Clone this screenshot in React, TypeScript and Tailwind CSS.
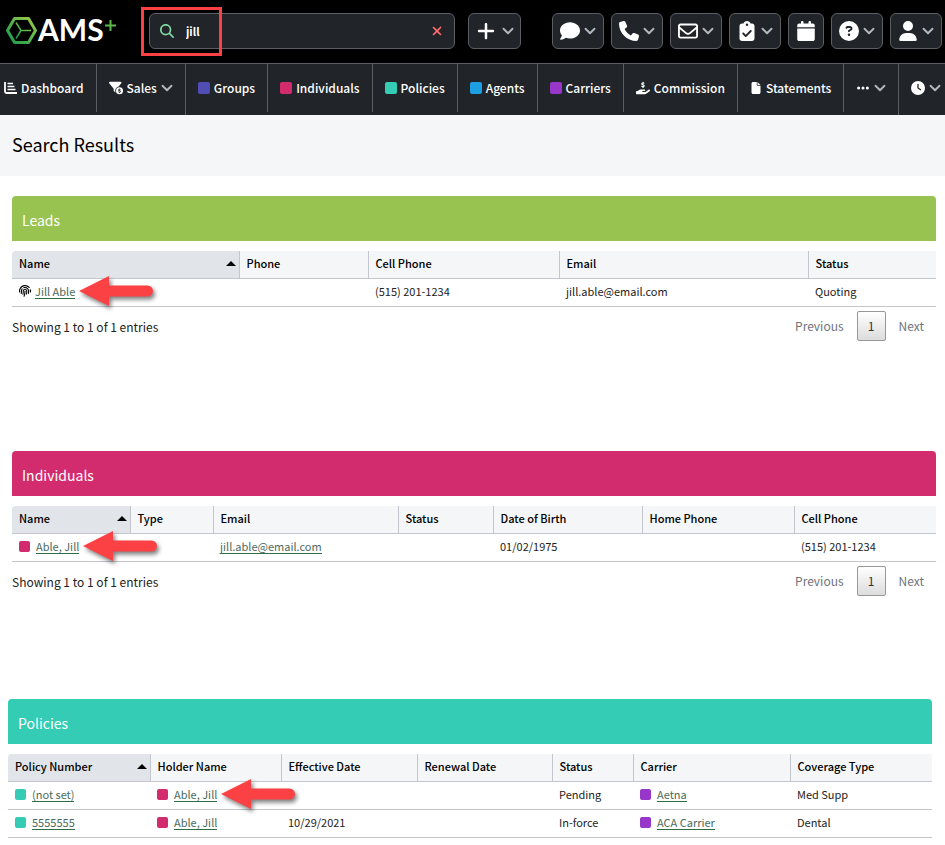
import type { ReactNode } from 'react';
import { ChevronDown } from 'lucide-react';
import {
  FaCalendar,
  FaCircleQuestion,
  FaClipboardCheck,
  FaClock,
  FaComment,
  FaEllipsis,
  FaFile,
  FaFilterCircleDollar,
  FaFingerprint,
  FaHandHoldingDollar,
  FaMagnifyingGlass,
  FaPhone,
  FaPlus,
  FaRegEnvelope,
  FaUser,
  FaXmark,
} from 'react-icons/fa6';

interface Column {
  label: string;
  width: string;
}

interface NavEntry {
  label: string;
  icon: ReactNode;
  menu?: boolean;
  tall?: boolean;
  hideLabel?: boolean;
}

function Square({ color }: { color: string }) {
  return <span className={`inline-block shrink-0 rounded-xs ${color}`} />;
}

function Caret() {
  return <ChevronDown className="-mx-[3px] size-[18px] shrink-0 text-[#b4b8bf]" strokeWidth={2.5} />;
}

function AxisIcon() {
  return (
    <svg viewBox="0 0 13 12" className="h-3 w-[13px]" fill="none" stroke="currentColor">
      <path d="M1 0v9.500a1.500 1.500 0 0 0 1.500 1.500H13" strokeWidth="1.800" />
      <path d="M3.500 1.500H9M3.500 4.500h7M3.500 7.500h8" strokeWidth="1.600" />
    </svg>
  );
}

function Logo() {
  return (
    <a href="#" aria-label="AMS+" className="flex h-9 w-[111px] shrink-0 items-center text-white">
      <svg viewBox="0 0 111 36" className="h-9 w-[111px]">
        <defs>
          <linearGradient id="hex" x1="0" y1="1" x2="1" y2="0">
            <stop offset="0" stopColor="#149a4b" />
            <stop offset="1" stopColor="#9ccb4c" />
          </linearGradient>
        </defs>
        <g fill="none" stroke="url(#hex)" strokeLinejoin="round">
          <path d="M8.500 5.500h14l7 12-7 12h-14l-7-12z" strokeWidth="3" />
          <path d="M15 17.500L10 9.500M15 17.500h10M15 17.500l-5 8" strokeWidth="1.500" />
        </g>
        <path d="M104.500 7v11M99 12.500h11" stroke="#5cb848" strokeWidth="2" />
        <text x="32" y="28" fill="#fff" fontSize="30" fontWeight="700" fontFamily="Lato, sans-serif">AMS</text>
      </svg>
    </a>
  );
}

// Red callout arrow, always points left
function Arrow() {
  return (
    <svg
      viewBox="0 0 74 34"
      className="pointer-events-none absolute top-1/2 left-full z-10 ml-1 h-[34px] w-[74px] -translate-y-1/2 overflow-visible drop-shadow-[2px_3px_2px_rgba(0,0,0,0.5)]"
    >
      <path d="M0 17L30 2v9.500h38.500a5 5 0 0 1 0 11H30V32z" fill="#fc4144" />
    </svg>
  );
}

function TextLink({ children, arrow }: { children: ReactNode; arrow?: boolean }) {
  return (
    <span className="relative inline-block">
      <a href="#" className="inline-block border-b border-[#2f6b43] leading-[14px] text-[#4b6b5c]">
        {children}
      </a>
      {arrow && <Arrow />}
    </span>
  );
}

function Marked({ color, children, arrow }: { color: string; children: ReactNode; arrow?: boolean }) {
  return (
    <span className="flex items-center gap-1.5">
      <Square color={`size-[11px] ${color}`} />
      <TextLink arrow={arrow}>{children}</TextLink>
    </span>
  );
}

const actions = [
  { label: 'Messages', icon: <FaComment className="size-5" /> },
  { label: 'Calls', icon: <FaPhone className="size-5" /> },
  { label: 'Email', icon: <FaRegEnvelope className="size-5" /> },
  { label: 'Tasks', icon: <FaClipboardCheck className="size-5" /> },
  { label: 'Calendar', icon: <FaCalendar className="size-5" />, plain: true },
  { label: 'Help', icon: <FaCircleQuestion className="size-5" /> },
  { label: 'Account', icon: <FaUser className="size-5" /> },
];

const navEntries: NavEntry[] = [
  { label: 'Dashboard', icon: <AxisIcon /> },
  { label: 'Sales', icon: <FaFilterCircleDollar className="size-3.5" />, menu: true, tall: true },
  { label: 'Groups', icon: <Square color="size-3 bg-[#524db5]" /> },
  { label: 'Individuals', icon: <Square color="size-3 bg-[#d32c6e]" /> },
  { label: 'Policies', icon: <Square color="size-3 bg-[#34ccb4]" /> },
  { label: 'Agents', icon: <Square color="size-3 bg-[#1f9fe3]" /> },
  { label: 'Carriers', icon: <Square color="size-3 bg-[#9737c9]" /> },
  { label: 'Commission', icon: <FaHandHoldingDollar className="size-3.5" /> },
  { label: 'Statements', icon: <FaFile className="size-3" /> },
  { label: 'More', icon: <FaEllipsis className="size-3.5" />, menu: true, tall: true, hideLabel: true },
  { label: 'Recent', icon: <FaClock className="size-3.5" />, menu: true, hideLabel: true },
];

const leadColumns: Column[] = [
  { label: 'Name', width: 'w-[227px]' },
  { label: 'Phone', width: 'w-[129px]' },
  { label: 'Cell Phone', width: 'w-[191px]' },
  { label: 'Email', width: 'w-[249px]' },
  { label: 'Status', width: '' },
];

const individualColumns: Column[] = [
  { label: 'Name', width: 'w-[118px]' },
  { label: 'Type', width: 'w-[83px]' },
  { label: 'Email', width: 'w-[185px]' },
  { label: 'Status', width: 'w-[95px]' },
  { label: 'Date of Birth', width: 'w-[149px]' },
  { label: 'Home Phone', width: 'w-[152px]' },
  { label: 'Cell Phone', width: '' },
];

const policyColumns: Column[] = [
  { label: 'Policy Number', width: 'w-[142px]' },
  { label: 'Holder Name', width: 'w-[131px]' },
  { label: 'Effective Date', width: 'w-[136px]' },
  { label: 'Renewal Date', width: 'w-[135px]' },
  { label: 'Status', width: 'w-[81px]' },
  { label: 'Carrier', width: 'w-[157px]' },
  { label: 'Coverage Type', width: '' },
];

const policies = [
  { number: '(not set)', holder: 'Able, Jill', effective: '', status: 'Pending', carrier: 'Aetna', coverage: 'Med Supp' },
  { number: '5555555', holder: 'Able, Jill', effective: '10/29/2021', status: 'In-force', carrier: 'ACA Carrier', coverage: 'Dental' },
  { number: '123456', holder: 'Able, Jill', effective: '', status: 'In-force', carrier: 'Aetna', coverage: 'MAPD' },
];

function ResultTable({ columns, rows }: { columns: Column[]; rows: ReactNode[][] }) {
  return (
    <table className="mt-2.5 w-full table-fixed border-collapse text-[11px]">
      <thead>
        <tr className="h-[27px] border-b border-[#c3c6ce] bg-[#f5f6f8] text-left text-black">
          {columns.map((col, i) => (
            <th
              key={col.label}
              className={`px-[7px] pt-0 pb-0.5 font-medium ${col.width} ${i === 0 ? 'rounded-tl bg-[#e1e5e9]' : ''} ${i < columns.length - 1 ? 'border-r border-[#c3c6ce]' : ''}`}
            >
              <span className="flex items-center justify-between whitespace-nowrap">
                {col.label}
                {i === 0 && (
                  <svg viewBox="0 0 10 5" className="-mr-1 h-[5px] w-2.5"><path d="M5 0l5 5H0z" /></svg>
                )}
              </span>
            </th>
          ))}
        </tr>
      </thead>
      <tbody>
        {rows.map((row, i) => (
          <tr key={i} className="h-7 border-b border-[#c3c6ce]">
            {row.map((cell, j) => (
              <td key={j} className="px-[7px] pt-0 pb-0.5 whitespace-nowrap">{cell}</td>
            ))}
          </tr>
        ))}
      </tbody>
    </table>
  );
}

function Section({ title, color, className, children }: { title: string; color: string; className: string; children: ReactNode }) {
  return (
    <section className={className}>
      <h2 className={`flex h-[45px] items-center rounded-t px-2.5 pt-0.5 text-sm text-white ${color}`}>{title}</h2>
      {children}
    </section>
  );
}

function TableFooter() {
  return (
    <div className="flex items-start justify-between pt-1">
      <p className="pt-1.5 text-xs leading-5">Showing 1 to 1 of 1 entries</p>
      <div className="flex items-center gap-px text-xs text-[#70747a]">
        <button className="px-3">Previous</button>
        <button className="h-[30px] w-[29px] rounded-xs border border-[#979797] bg-linear-to-b from-white to-[#dcdcdc] text-[#333]">1</button>
        <button className="px-3">Next</button>
      </div>
    </div>
  );
}

export default function App() {
  return (
    <div className="h-screen overflow-hidden bg-white font-['Noto_Sans_CJK_SC',sans-serif] text-[#222]">
      <header className="flex h-[63px] items-center bg-black pr-[3px] pb-px pl-1.5">
        <Logo />
        <div className="relative ml-8 flex h-9 flex-1 items-center rounded-md border border-[#5b5e62] bg-[#212429] px-2.5">
          <FaMagnifyingGlass className="size-3.5 shrink-0 text-[#7fd6a0]" />
          <input aria-label="Search" defaultValue="jill" className="ml-3 w-full bg-transparent text-[11px] font-bold text-white outline-none" />
          <button aria-label="Clear search" className="text-[#ff6b6b]"><FaXmark className="size-3.5" /></button>
          <div className="pointer-events-none absolute -top-[7px] -left-[9px] h-[49px] w-[81px] border-3 border-[#fc4144]" />
        </div>
        <button aria-label="Add" className="ml-[13px] flex h-9 w-[53px] shrink-0 items-center justify-center gap-1.5 rounded-md border border-[#5b5e62] bg-[#212429] text-white">
          <FaPlus className="size-5" />
          <Caret />
        </button>
        <div className="ml-[31px] flex gap-[7px]">
          {actions.map((action) => (
            <button
              key={action.label}
              aria-label={action.label}
              className={`flex h-9 shrink-0 items-center justify-center gap-1 rounded-md border border-[#5b5e62] bg-[#212429] text-white ${action.plain ? 'w-9' : 'w-[52px]'}`}
            >
              {action.icon}
              {!action.plain && <Caret />}
            </button>
          ))}
        </div>
      </header>

      <nav className="flex h-[52px] overflow-hidden border-t border-[#5b5e62] bg-[#212429]">
        {navEntries.map((entry, i) => (
          <a
            key={entry.label}
            href="#"
            aria-label={entry.label}
            className={`flex shrink-0 items-center gap-1 border-[#5b5e62] text-xs font-medium text-white ${i === 0 ? 'pr-3 pl-1' : 'px-3'} ${i < navEntries.length - 1 ? 'border-r' : ''} ${entry.tall ? 'h-[51px] pb-1' : 'h-12 pb-px'}`}
          >
            {entry.icon}
            {!entry.hideLabel && entry.label}
            {entry.menu && <Caret />}
          </a>
        ))}
      </nav>

      <div className="flex h-[61px] items-center bg-[#f5f6f8] px-3 pb-1">
        <h1 className="text-lg text-black">Search Results</h1>
      </div>

      <main>
        <Section title="Leads" color="bg-[#99c350]" className="mt-5 mr-[9px] ml-3 h-[255px]">
          <ResultTable
            columns={leadColumns}
            rows={[[
              <span className="flex items-center gap-1">
                <FaFingerprint className="size-3 text-black" />
                <TextLink arrow>Jill Able</TextLink>
              </span>,
              '',
              '(515) 201-1234',
              'jill.able@email.com',
              'Quoting',
            ]]}
          />
          <TableFooter />
        </Section>

        <Section title="Individuals" color="bg-[#d32c6e]" className="mr-[9px] ml-3 h-[248px]">
          <ResultTable
            columns={individualColumns}
            rows={[[
              <Marked color="bg-[#d32c6e]" arrow>Able, Jill</Marked>,
              '',
              <TextLink>jill.able@email.com</TextLink>,
              '',
              '01/02/1975',
              '',
              '(515) 201-1234',
            ]]}
          />
          <TableFooter />
        </Section>

        <Section title="Policies" color="bg-[#34ccb4]" className="mr-[13px] ml-2">
          <ResultTable
            columns={policyColumns}
            rows={policies.map((p, i) => [
              <Marked color="bg-[#34ccb4]">{p.number}</Marked>,
              <Marked color="bg-[#d32c6e]" arrow={i === 0}>{p.holder}</Marked>,
              p.effective,
              '',
              p.status,
              <Marked color="bg-[#9737c9]">{p.carrier}</Marked>,
              p.coverage,
            ])}
          />
        </Section>
      </main>
    </div>
  );
}
